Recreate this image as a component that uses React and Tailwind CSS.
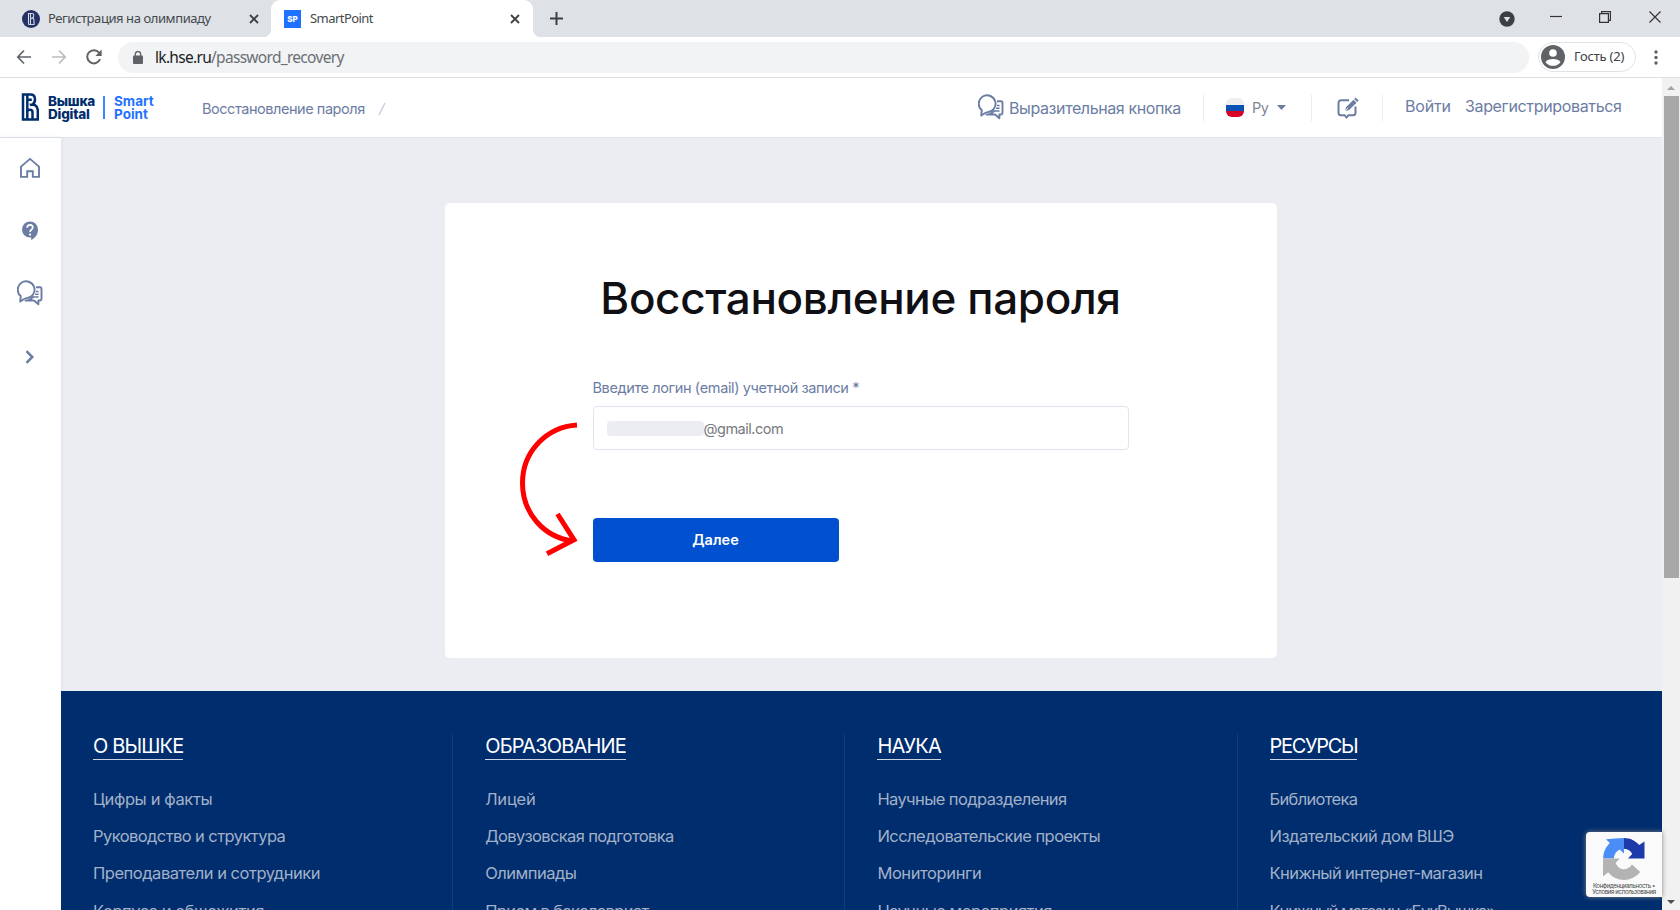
import React from 'react';

const columns = [
  {
    title: 'О ВЫШКЕ',
    titleClass: 'tracking-[-0.85px]',
    links: [
      ['Цифры и факты', 'tracking-[-0.38px]'],
      ['Руководство и структура', 'tracking-[-0.58px]'],
      ['Преподаватели и сотрудники', 'tracking-[-0.47px]'],
      ['Корпуса и общежития', 'tracking-[-0.44px]'],
    ],
  },
  {
    title: 'ОБРАЗОВАНИЕ',
    titleClass: 'tracking-[-0.83px]',
    links: [
      ['Лицей', 'tracking-[-0.2px]'],
      ['Довузовская подготовка', 'tracking-[-0.62px]'],
      ['Олимпиады', 'tracking-[-0.5px]'],
      ['Прием в бакалавриат', 'tracking-[-0.62px]'],
    ],
  },
  {
    title: 'НАУКА',
    titleClass: 'tracking-[-0.64px]',
    links: [
      ['Научные подразделения', 'tracking-[-0.59px]'],
      ['Исследовательские проекты', 'tracking-[-0.52px]'],
      ['Мониторинги', 'tracking-[-0.4px]'],
      ['Научные мероприятия', 'tracking-[-0.5px]'],
    ],
  },
  {
    title: 'РЕСУРСЫ',
    titleClass: 'tracking-[-1.3px]',
    links: [
      ['Библиотека', 'tracking-[-0.68px]'],
      ['Издательский дом ВШЭ', 'tracking-[-0.52px]'],
      ['Книжный интернет-магазин', 'tracking-[-0.59px]'],
      ['Книжный магазин «БукВышка»', 'tracking-[-1.1px]'],
    ],
  },
];

const CloseIcon = () => (
  <svg className="h-[10px] w-[10px]" viewBox="0 0 10 10" fill="none" stroke="#3c4043" strokeWidth="1.8">
    <path d="M1 1l8 8M9 1L1 9" />
  </svg>
);

const ChatIcon = () => (
  <svg className="h-[26px] w-[26px] shrink-0" viewBox="0 0 26 26" fill="none" stroke="#6b7da3" strokeWidth="1.9" strokeLinejoin="round">
    <path d="M3.8 16.2A8.400 8.400 0 1 1 9.500 18.100C7 18.300 5.200 20.500 3.200 21.600z" />
    <path d="M19 7.300h4a1.500 1.500 0 0 1 1.500 1.500v10.200a1.500 1.500 0 0 1-1.500 1.500h-1.600v3.800l-4.400-3.800H8.500c3.500 0 6-1.600 7.800-4" />
    <path d="M18.800 11.600h2.800M18 14.200h3.600M15.800 16.900h5.800" strokeWidth="1.500" />
  </svg>
);

const TabBar = () => (
  <div className="flex h-[37px] shrink-0 bg-[#dee1e6] text-[#45494d]">
    <div className="flex w-[271px] items-center pl-[22px] pr-3">
      <svg className="h-[18px] w-[18px]" viewBox="0 0 18 18" fill="none">
        <circle cx="9" cy="9" r="9" fill="#253067" />
        <path d="M6.500 14.500V3.500H10c2.300 0 2.300 3.600.2 4.500M6.500 14.500h5.500V10c0-2.500-3.500-2.500-3.500 0v4.500M8.500 4v4.500" stroke="#d5d8e6" strokeWidth="1.100" />
      </svg>
      <span className="ml-2 w-[190px] whitespace-nowrap text-[13px] tracking-[-0.42px]">Регистрация на олимпиаду</span>
      <span className="ml-[11px]"><CloseIcon /></span>
    </div>
    <div className="relative flex w-[262px] items-center rounded-t-[9px] bg-white pl-[13px]">
      <span className="absolute -left-2 bottom-0 h-2 w-2 bg-[radial-gradient(circle_at_0_0,transparent_8px,white_8.5px)]" />
      <span className="absolute -right-2 bottom-0 h-2 w-2 bg-[radial-gradient(circle_at_100%_0,transparent_8px,white_8.5px)]" />
      <span className="flex h-[18px] w-[17px] items-center justify-center bg-[#1f71ff] font-['Inter'] text-[8px] font-extrabold text-white">SP</span>
      <span className="ml-[9px] w-[200px] text-[13px] tracking-[-0.55px]">SmartPoint</span>
      <CloseIcon />
    </div>
    <div className="flex flex-1 items-center pl-[17px] pr-[19px]">
      <svg className="h-[13px] w-[13px]" viewBox="0 0 13 13" stroke="#3c4043" strokeWidth="2">
        <path d="M6.500 0v13M0 6.500h13" />
      </svg>
      <svg className="ml-auto h-[16px] w-[16px]" viewBox="0 0 16 16">
        <circle cx="8" cy="8" r="7.700" fill="#3c4043" />
        <path d="M4.700 6h6.600L8 11z" fill="#dee1e6" />
      </svg>
      <svg className="mb-1 ml-[35px] h-[12px] w-[12px]" viewBox="0 0 12 12" stroke="#333" strokeWidth="1.200">
        <path d="M0 5.500h12" />
      </svg>
      <svg className="mb-1 ml-[37px] h-[12px] w-[12px]" viewBox="0 0 12 12" fill="none" stroke="#333" strokeWidth="1.200">
        <path d="M.6 2.600h8.800v8.800H.6zM2.600 2.600V.6h8.800v8.800h-2" />
      </svg>
      <svg className="mb-1 ml-[38px] h-[12px] w-[12px]" viewBox="0 0 12 12" stroke="#333" strokeWidth="1.200">
        <path d="M.5.5l11 11M11.500.5l-11 11" />
      </svg>
    </div>
  </div>
);

const AddressBar = () => (
  <div className="flex h-[41px] shrink-0 items-center border-b border-[#dcdee1] bg-white pl-4">
    <svg className="h-4 w-4" viewBox="0 0 16 16" fill="none" stroke="#5f6368" strokeWidth="1.700">
      <path d="M15 8H2M8 1.500L1.800 8 8 14.500" />
    </svg>
    <svg className="ml-[19px] h-4 w-4" viewBox="0 0 16 16" fill="none" stroke="#babcbe" strokeWidth="1.700">
      <path d="M1 8h13M8 1.500L14.200 8 8 14.500" />
    </svg>
    <svg className="ml-[19px] h-4 w-4" viewBox="0 0 16 16" fill="none">
      <path d="M14 10.200A6.600 6.600 0 1 1 13 3.600" stroke="#5f6368" strokeWidth="2" />
      <path d="M15.700.6v6.300H9.400z" fill="#5f6368" />
    </svg>
    <div className="ml-4 flex h-[31px] w-[1411px] items-center rounded-full bg-[#f1f3f4] pl-[15px]">
      <svg className="h-[13px] w-[10px]" viewBox="0 0 10 13">
        <rect y="4.500" width="10" height="8.500" rx="1" fill="#5f6368" />
        <path d="M2.300 5V3.200a2.700 2.700 0 0 1 5.400 0V5" fill="none" stroke="#5f6368" strokeWidth="1.300" />
      </svg>
      <span className="ml-3 whitespace-nowrap pt-[2px] text-[15.5px] tracking-[-0.7px] text-[#6b6f74]">
        <span className="text-[#202124]">lk.hse.ru</span>/password_recovery
      </span>
    </div>
    <div className="ml-[9px] flex h-[30px] w-[98px] items-center rounded-full border border-[#e1e3e6] pl-[2px]">
      <svg className="h-6 w-6" viewBox="0 0 24 24">
        <circle cx="12" cy="12" r="12" fill="#5f6368" />
        <circle cx="12" cy="8" r="3.800" fill="#fff" />
        <path d="M4.500 17.200c2-4.200 13-4.200 15 0-3.500 4.900-11.500 4.900-15 0z" fill="#fff" />
      </svg>
      <span className="ml-[9px] whitespace-nowrap text-[13px] tracking-[-0.2px] text-[#3c4043]">Гость (2)</span>
    </div>
    <svg className="ml-[18px] h-[15px] w-[4px]" viewBox="0 0 4 15" fill="#5f6368">
      <circle cx="2" cy="2" r="1.700" />
      <circle cx="2" cy="7.500" r="1.700" />
      <circle cx="2" cy="13" r="1.700" />
    </svg>
  </div>
);

const Header = () => (
  <header className="flex h-[60px] shrink-0 items-center border-b border-[#e2e5ec] bg-white pl-[21px] text-[16px] text-[#6b7da3]">
    <svg className="mb-[2px] h-[28px] w-[18px]" viewBox="0 0 18 28" fill="none" stroke="#002d6e" strokeWidth="2.500">
      <path d="M2 26.600V1.600h7.600c5.500 0 5.700 8 1.200 10.400M.8 26.600h16V17.500c0-5.500-4.800-7-8-5.500M6.300 1.800v25M11.500 26.500v-7.200c0-3.300-5.200-3.300-5.200 0M6.800 6.800h4" />
    </svg>
    <div className="ml-[9px] w-[55px] text-[13.5px] font-extrabold leading-[13px] tracking-[-0.2px] text-[#002d6e]">
      Вышка
      <br />
      Digital
    </div>
    <div className="h-[23px] w-[2px] bg-[#3d85ff]" />
    <div className="ml-[9px] w-[88px] text-[13.5px] font-bold leading-[13px] text-[#1f71ff]">
      Smart
      <br />
      Point
    </div>
    <span className="whitespace-nowrap pt-[2px] text-[14.5px] tracking-[-0.45px]">Восстановление пароля</span>
    <svg className="ml-[13px] mt-[2px] h-[14px] w-[8px]" viewBox="0 0 8 14" stroke="#c3cad9" strokeWidth="1.200">
      <path d="M7 1L1 13" />
    </svg>
    <div className="ml-auto flex items-center">
      <div className="mb-[2px]"><ChatIcon /></div>
      <span className="ml-[5px] w-[194px] whitespace-nowrap tracking-[-0.4px]">Выразительная кнопка</span>
      <div className="h-[26px] w-px bg-[#e8ebf1]" />
      <svg className="ml-[22px] h-[19px] w-[18px]" viewBox="0 0 18 19">
        <clipPath id="flag"><rect width="18" height="19" rx="6" /></clipPath>
        <g clipPath="url(#flag)">
          <path d="M0 0h18v7H0z" fill="#eeeff1" />
          <path d="M0 7h18v6H0z" fill="#0b52b5" />
          <path d="M0 13h18v6H0z" fill="#d80027" />
        </g>
      </svg>
      <span className="ml-2 w-[25px] text-[14.5px] tracking-[-0.4px] text-[#808791]">Ру</span>
      <svg className="h-[5px] w-[9px]" viewBox="0 0 9 5" fill="#6b7da3"><path d="M0 0h9L4.500 5z" /></svg>
      <div className="ml-[25px] h-[26px] w-px bg-[#e8ebf1]" />
      <svg className="ml-[25px] h-[22px] w-[22px]" viewBox="0 0 22 22" fill="none">
        <path d="M12 3.200H4a2.500 2.500 0 0 0-2.500 2.500v10A2.500 2.500 0 0 0 4 18.200h3.500l2 2.300 2-2.300H16a2.500 2.500 0 0 0 2.500-2.500V9.500" stroke="#6b7da3" strokeWidth="2" />
        <path d="M8 14l1.200-4L16.500 2.700l3 3L12.100 13z" fill="#6b7da3" />
        <path d="M17.200 2l1.400-1.500 3.100 3-1.500 1.500z" fill="#6b7da3" />
        <path d="M8 14l3-3.200" stroke="#fff" strokeWidth=".8" />
      </svg>
      <div className="ml-[23px] h-[26px] w-px bg-[#e8ebf1]" />
      <span className="mb-1 ml-[22px] w-[60px] tracking-[-0.2px]">Войти</span>
      <span className="mb-1 w-[197px] whitespace-nowrap tracking-[-0.35px]">Зарегистрироваться</span>
    </div>
  </header>
);

const Sidebar = () => (
  <aside className="z-10 flex w-[61px] shrink-0 flex-col items-center bg-white pr-[2px] pt-[19px] shadow-[0_0_4px_rgba(60,80,130,0.12)]">
    <svg className="h-[22px] w-[22px]" viewBox="0 0 22 22" fill="none" stroke="#6b7da3" strokeWidth="1.900">
      <path d="M2 9.600L11 1.900l9 7.700v10.300h-6.200v-5.700H8.200v5.700H2z" />
    </svg>
    <svg className="mt-[42px] h-[19px] w-[18px]" viewBox="0 0 18 19">
      <path d="M9 .5a8 8 0 1 0 0 16l1.200 0V19c4-2 6.800-5.500 6.800-10.500A8 8 0 0 0 9 .5z" fill="#6b7da3" />
      <path d="M6.200 6.700c0-4 5.600-3.600 5.600-.3 0 2.200-2.800 2.400-2.800 4.700" fill="none" stroke="#fff" strokeWidth="1.700" />
      <circle cx="9" cy="13.600" r="1.100" fill="#fff" />
    </svg>
    <div className="mt-10"><ChatIcon /></div>
    <svg className="mt-11 h-[14px] w-[9px]" viewBox="0 0 9 14" fill="none" stroke="#6b7da3" strokeWidth="2.500">
      <path d="M1.500 1.200L7.300 7l-5.800 5.800" />
    </svg>
  </aside>
);

const RecoveryCard = () => (
  <section className="relative h-[455px] w-[832px] rounded-[5px] bg-white px-[148px] pt-[66px]">
    <h1 className="whitespace-nowrap text-center text-[44px] font-medium leading-[58px] tracking-[-0.36px] text-[#101014]">Восстановление пароля</h1>
    <label className="mt-[51px] block whitespace-nowrap text-[14.5px] leading-5 tracking-[-0.38px] text-[#6b7da3]">
      Введите логин (email) учетной записи *
    </label>
    <div className="mt-2 flex h-[44px] w-[536px] items-center rounded-[4px] border border-[#e1e4ee] pl-[13px] text-[14.5px] text-[#77797f]">
      <span className="h-[15px] w-[97px] rounded-[4px] bg-[#ecedf3]" />
      <span className="pt-px tracking-[-0.5px]">@gmail.com</span>
    </div>
    <button className="mt-[68px] flex h-[44px] w-[246px] items-center justify-center rounded-[4px] bg-[#0050cf] text-[14.5px] font-semibold text-white">
      Далее
    </button>
    <svg className="absolute left-[70px] top-[214px] h-[144px] w-[66px]" viewBox="0 0 66 144" fill="none" stroke="#f00" strokeWidth="5">
      <path d="M62 8C32 10 7.500 34 7.500 66c0 30 21 54 50 58" />
      <path d="M42.500 97L59 122.800l-27 14" />
    </svg>
  </section>
);

const Captcha = () => (
  <div className="absolute bottom-[13px] right-0 flex h-[65px] w-[76px] flex-col items-center rounded-l-[4px] bg-[#fafafa] pt-[6px] shadow-[0_0_5px_#808080]">
    <svg className="h-[42px] w-[42px]" viewBox="0 0 42 42">
      <path d="M21 0v15.500l-4.500-4A10.300 10.300 0 0 0 11 20.500H.2C.2 13.500 3 9 6.800 5L3 1.200C9 .5 15 .2 21 0z" fill="#4a8df6" />
      <path d="M21 0c6.500 0 11.500 2.800 15.200 7L41.500 3.500v17H25l4.200-4.500c-1.500-3.200-4.200-5-8.200-5.200z" fill="#1c3aa9" />
      <path d="M0 20.500h16.800l-4.200 4.400c4.400 9 12.400 7.600 16.400 1.600l8.200 7.500C28 45 13 44 5.200 34.200L0 38.500z" fill="#b3b3b3" />
    </svg>
    <div className="mt-[3px] whitespace-nowrap text-center text-[6px] leading-[6px] tracking-[-0.32px] text-[#444]">
      Конфиденциальность •
      <br />
      Условия использования
    </div>
  </div>
);

const Footer = () => (
  <footer className="grid h-[219px] shrink-0 grid-cols-[repeat(4,392.2px)] overflow-hidden bg-[#002d6e] pt-[43px]">
    {columns.map((column) => (
      <div key={column.title} className="border-r border-[#133c79] pl-8 last:border-r-0">
        <h2 className={`inline-block whitespace-nowrap border-b border-[#ccd5e2] text-[20px] leading-[25px] text-white ${column.titleClass}`}>
          {column.title}
        </h2>
        <ul className="mt-[21px] text-[16.5px] leading-[37.2px] text-[#a3b1c8]">
          {column.links.map(([label, spacing]) => (
            <li key={label} className={`whitespace-nowrap ${spacing}`}>{label}</li>
          ))}
        </ul>
      </div>
    ))}
  </footer>
);

const Scrollbar = () => (
  <div className="flex w-[18px] shrink-0 flex-col items-center bg-[#f1f1f1] pb-[6px] pt-[8px]">
    <svg className="h-[4px] w-[8px]" viewBox="0 0 8 4" fill="#a3a3a3"><path d="M0 4h8L4 0z" /></svg>
    <div className="mt-[6px] h-[482px] w-[15px] bg-[#a8a8a8]" />
    <svg className="mt-auto h-[4px] w-[8px]" viewBox="0 0 8 4" fill="#505050"><path d="M0 0h8L4 4z" /></svg>
  </div>
);

const App = () => {
  return (
    <div className="flex h-[910px] w-[1680px] flex-col overflow-hidden bg-white font-['Noto_Sans',sans-serif]">
      <TabBar />
      <AddressBar />
      <div className="flex min-h-0 flex-1">
        <div className="relative flex min-w-0 flex-1 flex-col font-['Inter',sans-serif]">
          <Header />
          <div className="flex min-h-0 flex-1">
            <Sidebar />
            <main className="flex min-w-0 flex-1 flex-col bg-[#ecedf2]">
              <div className="flex h-[553px] shrink-0 justify-center pr-[2px] pt-[65px]">
                <RecoveryCard />
              </div>
              <Footer />
            </main>
          </div>
          <Captcha />
        </div>
        <Scrollbar />
      </div>
    </div>
  );
};

export default App;
